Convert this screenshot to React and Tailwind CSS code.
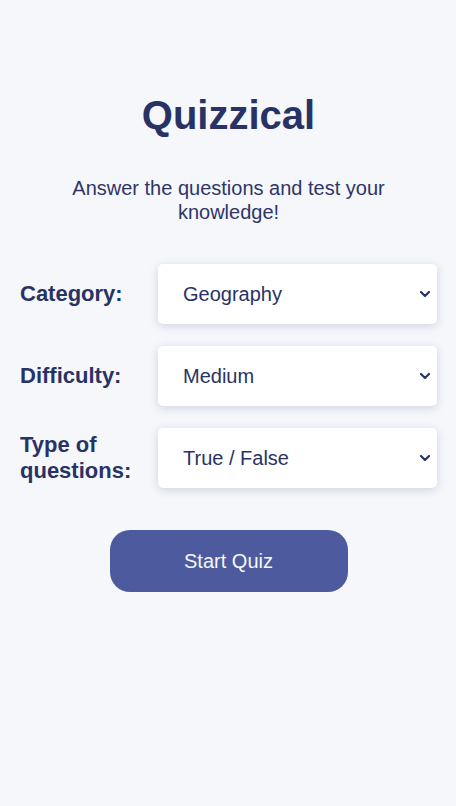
import React, { useState } from 'react';

const fields = [
  { key: 'category', label: 'Category:', options: ['Any Category', 'General Knowledge', 'Geography', 'History', 'Science & Nature'] },
  { key: 'difficulty', label: 'Difficulty:', options: ['Any Difficulty', 'Easy', 'Medium', 'Hard'] },
  { key: 'type', label: 'Type of questions:', options: ['Any Type', 'Multiple Choice', 'True / False'] },
];

export default function App() {
  const [form, setForm] = useState({ category: 'Geography', difficulty: 'Medium', type: 'True / False' });

  return (
    <div className="min-h-screen bg-[#f5f7fb] pt-[90px] pr-[19px] pl-5 text-[#293264] [font-family:'Liberation_Sans',Arial,sans-serif]">
      <h1 className="text-center text-[40px] leading-[50px] font-bold">Quizzical</h1>
      <p className="mx-auto mt-[36px] max-w-[340px] text-center text-[20px] leading-[24px] text-[#2f3567]">
        Answer the questions and test your knowledge!
      </p>

      <div className="mt-[40px] flex flex-col gap-[22px]">
        {fields.map((f) => (
          <div key={f.key} className="flex items-center">
            <label className="w-[138px] text-[22px] leading-[26px] font-bold">{f.label}</label>
            <div className="relative flex-1">
              <select
                value={form[f.key]}
                onChange={(e) => setForm({ ...form, [f.key]: e.target.value })}
                className="h-[60px] w-full appearance-none rounded-[5px] bg-white pl-[25px] text-[20px] text-[#293264] shadow-[0_2px_10px_rgba(41,50,100,.18)] outline-none"
              >
                {f.options.map((o) => (
                  <option key={o}>{o}</option>
                ))}
              </select>
              <svg
                className="pointer-events-none absolute top-1/2 right-[6px] -translate-y-1/2"
                width="12"
                height="8"
                viewBox="0 0 12 8"
                fill="none"
              >
                <path d="M2 2l4 4 4-4" stroke="#293264" strokeWidth="2.2" strokeLinecap="round" strokeLinejoin="round" />
              </svg>
            </div>
          </div>
        ))}
      </div>

      <div className="mt-[42px] flex justify-center">
        <button className="h-[62px] w-[238px] rounded-[20px] bg-[#4d5b9e] text-[20px] text-[#f5f7fb]">Start Quiz</button>
      </div>
    </div>
  );
}
